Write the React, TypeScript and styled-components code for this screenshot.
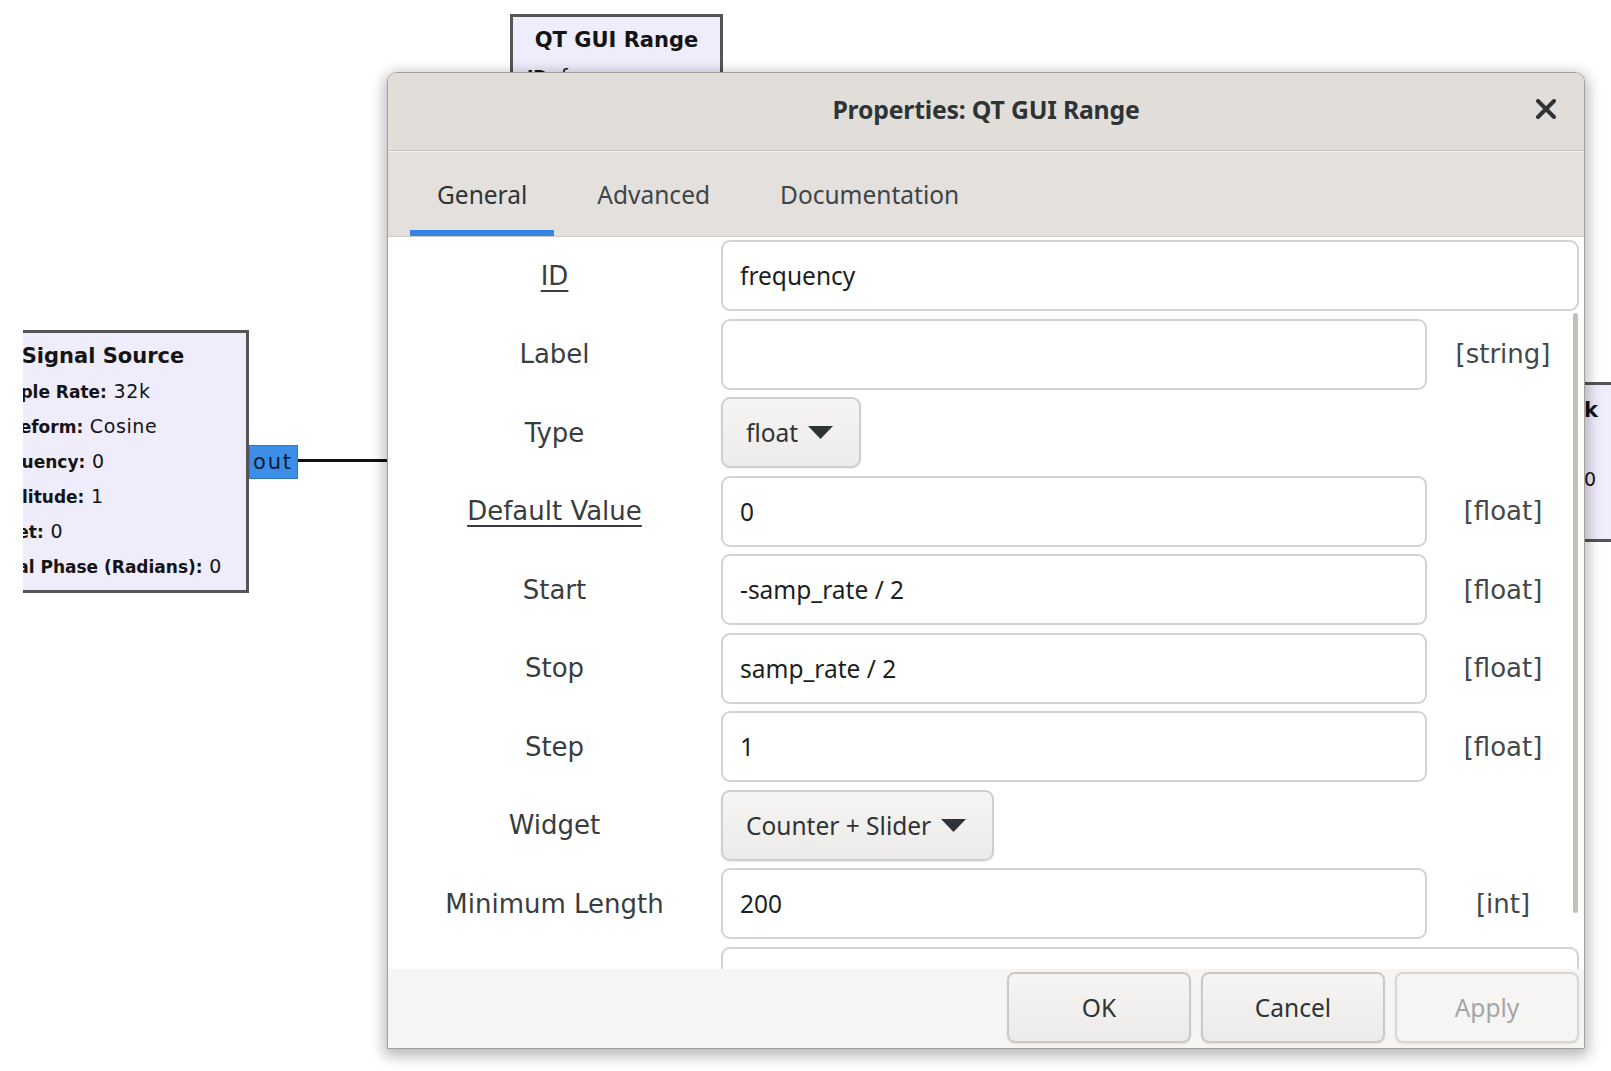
import React from "react";
import styled, { createGlobalStyle } from "styled-components";

const Global = createGlobalStyle`
  html, body { margin: 0; padding: 0; background: #ffffff; overflow: hidden; }
  body { width: 1611px; height: 1071px; font-family: "Noto Sans", "DejaVu Sans", sans-serif; }
  #root { width: 1611px; height: 1071px; }
  * { box-sizing: border-box; }
`;

const Page = styled.div`
  width: 1611px;
  height: 1071px;
  background: #ffffff;
  overflow: hidden;
  padding-left: 23px;
`;

const CanvasView = styled.div`
  position: relative;
  width: 1588px;
  height: 1071px;
  overflow: hidden;
`;

const Block = styled.div<{ $x: number; $y: number; $w: number; $h: number }>`
  position: absolute;
  left: ${(p) => p.$x}px;
  top: ${(p) => p.$y}px;
  width: ${(p) => p.$w}px;
  height: ${(p) => p.$h}px;
  border: 3px solid #555555;
  background: #efecfb;
  font-family: "DejaVu Sans", sans-serif;
  color: #141414;
`;

const BlockTitle = styled.div<{ $pt: number; $lh: number }>`
  font-weight: bold;
  font-size: 21px;
  line-height: ${(p) => p.$lh}px;
  padding-top: ${(p) => p.$pt}px;
  text-align: center;
  white-space: nowrap;
`;

const Params = styled.div<{ $pl: number; $pt?: number }>`
  padding-left: ${(p) => p.$pl}px;
  padding-top: ${(p) => p.$pt ?? 0}px;
`;

const ParamLine = styled.div`
  height: 35px;
  font-size: 19px;
  letter-spacing: 0.6px;
  line-height: 35px;
  white-space: nowrap;
  b { font-weight: bold; font-size: 17px; letter-spacing: 0; line-height: 1; }
`;

/* right-hand block whose left part is hidden under the dialog: lines end at a fixed x */
const EndColumn = styled.div`
  width: 155px;
  display: flex;
  flex-direction: column;
  align-items: flex-end;
  padding-top: 7px;
`;

const EndTitle = styled.div`
  font-weight: bold;
  font-size: 21px;
  line-height: 36px;
  white-space: nowrap;
`;

const EndLine = styled.div<{ $pr?: number }>`
  height: 34px;
  font-size: 19px;
  line-height: 34px;
  white-space: nowrap;
  padding-right: ${(p) => p.$pr ?? 0}px;
  b { font-weight: bold; font-size: 17px; line-height: 1; }
`;

const Port = styled.div<{ $x: number; $y: number }>`
  position: absolute;
  left: ${(p) => p.$x}px;
  top: ${(p) => p.$y}px;
  width: 49px;
  height: 34px;
  background: #3c8ee6;
  border: 1px solid #2f78c8;
  font-family: "DejaVu Sans", sans-serif;
  font-size: 21px;
  letter-spacing: 1.8px;
  line-height: 32px;
  color: #0e1a38;
  padding-left: 3px;
`;

const Wire = styled.div<{ $x: number; $y: number; $w: number }>`
  position: absolute;
  left: ${(p) => p.$x}px;
  top: ${(p) => p.$y}px;
  width: ${(p) => p.$w}px;
  height: 3px;
  background: #111111;
`;

const Dialog = styled.div`
  position: absolute;
  left: 364px;
  top: 72px;
  width: 1198px;
  height: 977px;
  display: flex;
  flex-direction: column;
  background: #ffffff;
  border: 1px solid #a39f9b;
  border-radius: 10px 10px 0 0;
  overflow: hidden;
  box-shadow: 0 4px 14px 3px rgba(0, 0, 0, 0.28);
`;

const TitleBar = styled.div`
  height: 78px;
  flex: none;
  display: grid;
  grid-template-columns: 1fr auto 1fr;
  align-items: center;
  padding-bottom: 5px;
  background: #e1deda;
  border-bottom: 1px solid #c6c2be;
`;

const Title = styled.div`
  grid-column: 2;
  font-family: "Noto Sans", sans-serif;
  font-weight: bold;
  font-size: 24.8px;
  color: #2e3436;
  letter-spacing: -0.2px;
`;

const CloseButton = styled.div`
  grid-column: 3;
  justify-self: end;
  margin-right: 28px;
  width: 20px;
  height: 20px;
  display: flex;
`;

const TabBar = styled.div`
  height: 86px;
  flex: none;
  display: flex;
  gap: 16px;
  padding-left: 22px;
  background: #e3e0dd;
  border-top: 1px solid #f3f1ef;
  border-bottom: 1px solid #cfcac5;
`;

const Tab = styled.div<{ $active?: boolean }>`
  display: flex;
  align-items: center;
  padding: 6px 27px 0;
  border-bottom: 6px solid ${(p) => (p.$active ? "#3584e4" : "transparent")};
  font-size: 24.5px;
  color: ${(p) => (p.$active ? "#2e3436" : "#3f4446")};
`;

const Content = styled.div`
  position: relative;
  flex: 1;
  overflow: hidden;
  background: #ffffff;
`;

const Form = styled.div`
  display: grid;
  grid-template-columns: 333px 706px 1fr;
  grid-auto-rows: 71px;
  row-gap: 7.5px;
  padding: 3px 5px 0 0;
`;

const Label = styled.div<{ $underline?: boolean }>`
  grid-column: 1;
  display: flex;
  align-items: center;
  justify-content: center;
  font-family: "DejaVu Sans", sans-serif;
  font-size: 26px;
  color: #3a3d3f;
  text-decoration: ${(p) => (p.$underline ? "underline" : "none")};
  text-decoration-thickness: 2px;
  text-underline-offset: 5px;
`;

const Entry = styled.div<{ $span?: boolean }>`
  grid-column: ${(p) => (p.$span ? "2 / 4" : "2")};
  display: flex;
  align-items: center;
  padding-left: 17px;
  border: 2px solid #d6d2ce;
  border-radius: 9px;
  background: #ffffff;
  font-size: 24.5px;
  color: #1c1f20;
`;

const Dropdown = styled.div`
  grid-column: 2;
  justify-self: start;
  display: flex;
  align-items: center;
  gap: 10px;
  padding: 0 26px 0 23px;
  border: 2px solid #d2cdc8;
  border-radius: 9px;
  background: linear-gradient(#f6f5f4, #edebe9);
  box-shadow: 0 1px 2px rgba(0, 0, 0, 0.08);
  font-size: 24.5px;
  color: #2e3436;
`;

const Hint = styled.div`
  grid-column: 3;
  display: flex;
  align-items: center;
  justify-content: center;
  font-family: "DejaVu Sans", sans-serif;
  font-size: 26px;
  color: #444849;
`;

const Scrollbar = styled.div`
  position: absolute;
  right: 6px;
  top: 76px;
  width: 5px;
  height: 600px;
  border-radius: 3px;
  background: #c3c0bc;
`;

const ButtonBar = styled.div`
  height: 79px;
  flex: none;
  display: flex;
  justify-content: flex-end;
  gap: 10px;
  padding: 3px 5px 5px;
  background: #f6f5f4;
`;

const DialogButton = styled.div<{ $disabled?: boolean }>`
  width: 184px;
  display: flex;
  align-items: center;
  justify-content: center;
  border: 2px solid ${(p) => (p.$disabled ? "#dad6d2" : "#cdc8c3")};
  border-radius: 8px;
  background: ${(p) => (p.$disabled ? "#f6f5f4" : "linear-gradient(#f6f5f4, #edebe9)")};
  box-shadow: 0 1px 2px rgba(0, 0, 0, 0.08);
  font-size: 24.5px;
  color: ${(p) => (p.$disabled ? "#a3a6a7" : "#2e3436")};
`;

const Arrow = () => (
  <svg width="25" height="13" viewBox="0 0 25 13">
    <path d="M0 0 H25 L12.5 13 Z" fill="#2e3436" />
  </svg>
);

const CloseIcon = () => (
  <svg width="20" height="20" viewBox="0 0 20 20">
    <path d="M2 2 L18 18 M18 2 L2 18" stroke="#2e3436" strokeWidth="4" strokeLinecap="round" />
  </svg>
);

type Row =
  | { kind: "entry"; label: string; value: string; hint?: string; underline?: boolean; span?: boolean }
  | { kind: "drop"; label: string; value: string };

const rows: Row[] = [
  { kind: "entry", label: "ID", value: "frequency", underline: true, span: true },
  { kind: "entry", label: "Label", value: "", hint: "[string]" },
  { kind: "drop", label: "Type", value: "float" },
  { kind: "entry", label: "Default Value", value: "0", hint: "[float]", underline: true },
  { kind: "entry", label: "Start", value: "-samp_rate / 2", hint: "[float]" },
  { kind: "entry", label: "Stop", value: "samp_rate / 2", hint: "[float]" },
  { kind: "entry", label: "Step", value: "1", hint: "[float]" },
  { kind: "drop", label: "Widget", value: "Counter + Slider" },
  { kind: "entry", label: "Minimum Length", value: "200", hint: "[int]" },
  { kind: "entry", label: "", value: "", span: true },
];

export default function App() {
  return (
    <Page>
      <Global />
      <CanvasView>
        <Block $x={487} $y={14} $w={213} $h={200}>
          <BlockTitle $pt={9} $lh={28}>QT GUI Range</BlockTitle>
          <Params $pl={14} $pt={5}>
            <ParamLine>
              <b>ID:</b> frequency
            </ParamLine>
          </Params>
        </Block>

        <Block $x={-66} $y={330} $w={292} $h={263}>
          <BlockTitle $pt={5} $lh={36}>Signal Source</BlockTitle>
          <Params $pl={19}>
            <ParamLine><b>Sample Rate:</b> 32k</ParamLine>
            <ParamLine><b>Waveform:</b> Cosine</ParamLine>
            <ParamLine><b>Frequency:</b> 0</ParamLine>
            <ParamLine><b>Amplitude:</b> 1</ParamLine>
            <ParamLine><b>Offset:</b> 0</ParamLine>
            <ParamLine><b>Initial Phase (Radians):</b> 0</ParamLine>
          </Params>
        </Block>
        <Port $x={226} $y={445}>out</Port>
        <Wire $x={275} $y={459} $w={140} />

        <Block $x={1417} $y={382} $w={300} $h={160}>
          <EndColumn>
            <EndTitle>QT GUI Sink</EndTitle>
            <EndLine $pr={40}>
              <b>FFT Size:</b> 1024
            </EndLine>
            <EndLine $pr={2}>
              <b>Center Frequency (Hz):</b> 0
            </EndLine>
          </EndColumn>
        </Block>

        <Dialog>
          <TitleBar>
            <Title>Properties: QT GUI Range</Title>
            <CloseButton>
              <CloseIcon />
            </CloseButton>
          </TitleBar>
          <TabBar>
            <Tab $active>General</Tab>
            <Tab>Advanced</Tab>
            <Tab>Documentation</Tab>
          </TabBar>
          <Content>
            <Form>
              {rows.map((r, i) => (
                <React.Fragment key={i}>
                  <Label $underline={r.kind === "entry" && r.underline}>{r.label}</Label>
                  {r.kind === "entry" ? (
                    <>
                      <Entry $span={r.span}>{r.value}</Entry>
                      {!r.span && <Hint>{r.hint ?? ""}</Hint>}
                    </>
                  ) : (
                    <Dropdown>
                      <span>{r.value}</span>
                      <Arrow />
                    </Dropdown>
                  )}
                </React.Fragment>
              ))}
            </Form>
            <Scrollbar />
          </Content>
          <ButtonBar>
            <DialogButton>OK</DialogButton>
            <DialogButton>Cancel</DialogButton>
            <DialogButton $disabled>Apply</DialogButton>
          </ButtonBar>
        </Dialog>
      </CanvasView>
    </Page>
  );
}
